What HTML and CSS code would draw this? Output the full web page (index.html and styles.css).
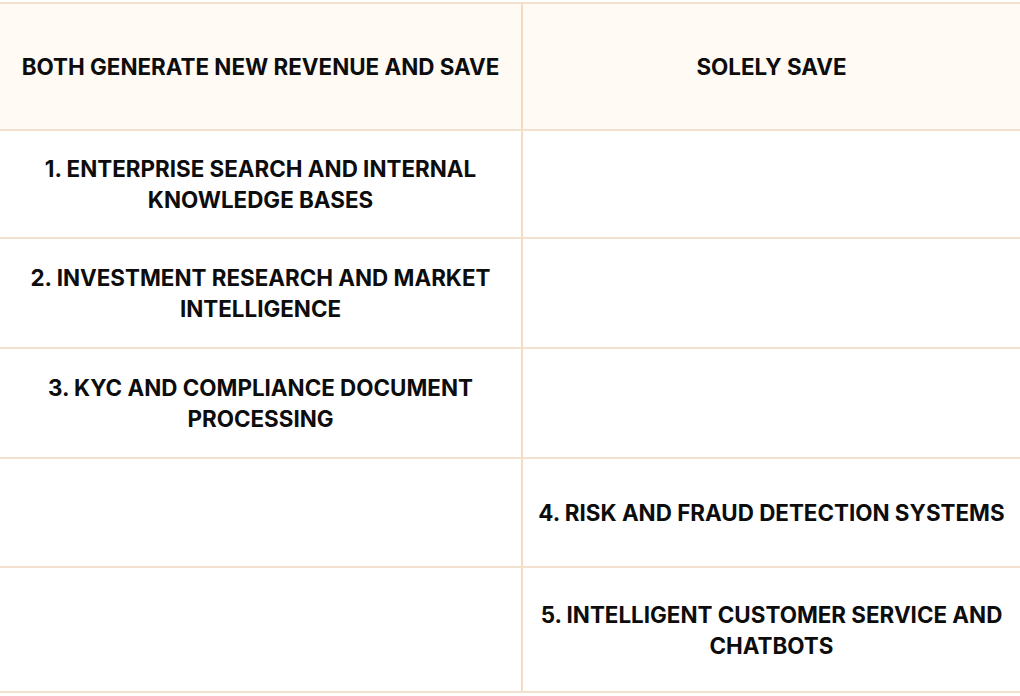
FILE: index.html
```html
<!DOCTYPE html>
<html lang="en">
<head>
<meta charset="utf-8">
<title>Use cases</title>
<link rel="stylesheet" href="styles.css">
</head>
<body>
<table class="grid">
  <colgroup>
    <col class="col-left">
    <col class="col-right">
  </colgroup>
  <thead>
    <tr class="head-row">
      <th class="cell cell-left">BOTH GENERATE NEW REVENUE AND SAVE</th>
      <th class="cell cell-right">SOLELY SAVE</th>
    </tr>
  </thead>
  <tbody>
    <tr class="row row-1">
      <td class="cell cell-left">1. ENTERPRISE SEARCH AND INTERNAL<br>KNOWLEDGE BASES</td>
      <td class="cell cell-right"></td>
    </tr>
    <tr class="row row-2">
      <td class="cell cell-left">2. INVESTMENT RESEARCH AND MARKET<br>INTELLIGENCE</td>
      <td class="cell cell-right"></td>
    </tr>
    <tr class="row row-3">
      <td class="cell cell-left">3. KYC AND COMPLIANCE DOCUMENT<br>PROCESSING</td>
      <td class="cell cell-right"></td>
    </tr>
    <tr class="row row-4">
      <td class="cell cell-left"></td>
      <td class="cell cell-right">4. RISK AND FRAUD DETECTION SYSTEMS</td>
    </tr>
    <tr class="row row-5">
      <td class="cell cell-left"></td>
      <td class="cell cell-right">5. INTELLIGENT CUSTOMER SERVICE AND<br>CHATBOTS</td>
    </tr>
  </tbody>
</table>
</body>
</html>
```

FILE: styles.css
```css
html, body {
  margin: 0;
  padding: 0;
  background: #ffffff;
}

body {
  font-family: "Inter", "Liberation Sans", sans-serif;
}

.grid {
  width: 1020px;
  margin-top: 2px;
  border-collapse: collapse;
  table-layout: fixed;
}

.col-left {
  width: 522px;
}

.col-right {
  width: 498px;
}

.cell {
  padding: 0 6px;
  text-align: center;
  vertical-align: middle;
  font-size: 22.4px;
  line-height: 31px;
  font-weight: 700;
  color: #0d0d0d;
  white-space: nowrap;
  border-top: 2px solid #f3e1cf;
  border-bottom: 2px solid #f3e1cf;
}

.cell-left {
  border-right: 2px solid #f3dcc2;
}

.head-row .cell {
  height: 125px;
  background: #fffaf4;
}

.row-1 .cell { height: 106px; }
.row-2 .cell { height: 108px; }
.row-3 .cell { height: 108px; }
.row-4 .cell { height: 107px; }
.row-5 .cell { height: 123px; }
```
